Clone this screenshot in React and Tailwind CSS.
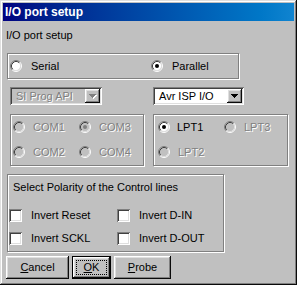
import React from "react";

const sunken =
  "shadow-[inset_1px_1px_#808080,inset_-1px_-1px_#fff,inset_2px_2px_#404040,inset_-2px_-2px_#dfdfdf]";
const raised =
  "shadow-[inset_-1px_-1px_#0a0a0a,inset_1px_1px_#fff,inset_-2px_-2px_#808080,inset_2px_2px_#dfdfdf]";
const etched = "border border-[#808080] shadow-[1px_1px_0_#fff,inset_1px_1px_0_#fff]";
const greyText = "text-[#808080] [text-shadow:1px_1px_0_#fff]";

function Radio({ checked, disabled }) {
  return (
    <svg width="12" height="12" viewBox="0 0 12 12" className="shrink-0">
      <circle cx="6" cy="6" r="4.5" fill={disabled ? "#c0c0c0" : "#fff"} />
      <path d="M2.11 9.89A5.5 5.5 0 0 1 9.89 2.11" fill="none" stroke="#808080" />
      <path d="M9.89 2.11A5.5 5.5 0 0 1 2.11 9.89" fill="none" stroke="#fff" />
      <path d="M2.82 9.18A4.5 4.5 0 0 1 9.18 2.82" fill="none" stroke="#404040" />
      <path d="M9.18 2.82A4.5 4.5 0 0 1 2.82 9.18" fill="none" stroke="#dfdfdf" />
      {checked && <circle cx="6" cy="6" r="2" fill={disabled ? "#808080" : "#000"} />}
    </svg>
  );
}

function RadioItem({ label, checked, disabled, className = "", gap = "ml-[8px]" }) {
  return (
    <div className={`flex h-[12px] items-center ${className}`}>
      <Radio checked={checked} disabled={disabled} />
      <span className={`${gap} leading-[12px] ${disabled ? greyText : ""}`}>{label}</span>
    </div>
  );
}

function Arrow({ disabled }) {
  const d = "M0 0h7v1h-1v1h-1v1h-1v1h-1v-1h-1v-1h-1v-1h-1z";
  return (
    <svg width="8" height="5" viewBox="0 0 8 5">
      {disabled && <path d={d} transform="translate(1 1)" fill="#fff" />}
      <path d={d} fill={disabled ? "#808080" : "#000"} />
    </svg>
  );
}

function Combo({ value, disabled, className }) {
  return (
    <div
      className={`flex h-[18px] items-center p-[2px] ${disabled ? "bg-[#c0c0c0]" : "bg-white"} ${sunken} ${className}`}
    >
      <span className={`flex-1 pl-[4px] leading-[13px] ${disabled ? greyText : ""}`}>{value}</span>
      <div className={`flex h-[14px] w-[15px] items-center justify-center bg-[#c0c0c0] pl-[1px] ${raised}`}>
        <Arrow disabled={disabled} />
      </div>
    </div>
  );
}

function Check({ label, className = "" }) {
  return (
    <div className={`flex h-[13px] items-center ${className}`}>
      <div className={`h-[13px] w-[13px] shrink-0 bg-white ${sunken}`} />
      <span className="ml-[9px] leading-[13px]">{label}</span>
    </div>
  );
}

function Button({ children, className = "", isDefault }) {
  if (isDefault) {
    return (
      <button className={`flex h-[23px] border border-black bg-[#c0c0c0] p-[3px] ${raised} ${className}`}>
        <span className="flex flex-1 items-center justify-center border border-dotted border-black">
          {children}
        </span>
      </button>
    );
  }
  return (
    <button className={`flex h-[23px] items-center justify-center bg-[#c0c0c0] ${raised} ${className}`}>
      {children}
    </button>
  );
}

export default function App() {
  return (
    <div
      className={`flex h-[285px] w-[297px] flex-col bg-[#c0c0c0] p-[3px] font-['Liberation_Sans',Arial,sans-serif] text-[11px] text-black shadow-[inset_-1px_-1px_#0a0a0a,inset_1px_1px_#dfdfdf,inset_-2px_-2px_#808080,inset_2px_2px_#fff]`}
    >
      <div className="flex h-[18px] items-center bg-gradient-to-r from-[#000080] to-[#1084d0] pl-[2px] text-[12px] font-bold text-white">
        I/O port setup
      </div>

      <div className="ml-[3px] mt-[8px] leading-[13px]">I/O port setup</div>

      <div className={`ml-[4px] mt-[11px] flex h-[26px] w-[232px] items-center pl-[2px] ${etched}`}>
        <RadioItem label="Serial" className="w-[141px]" gap="ml-[9px]" />
        <RadioItem label="Parallel" checked gap="ml-[9px]" />
      </div>

      <div className="mt-[8px] flex">
        <Combo value="SI Prog API" disabled className="ml-[7px] w-[92px]" />
        <Combo value="Avr ISP I/O" className="ml-[51px] w-[91px]" />
      </div>

      <div className="mt-[9px] flex">
        <div className={`ml-[7px] flex h-[52px] w-[134px] flex-col gap-[13px] pl-[2px] pt-[6px] ${etched}`}>
          <div className="flex">
            <RadioItem label="COM1" disabled className="w-[66px]" />
            <RadioItem label="COM3" disabled checked />
          </div>
          <div className="flex">
            <RadioItem label="COM2" disabled className="w-[66px]" />
            <RadioItem label="COM4" disabled />
          </div>
        </div>
        <div className={`ml-[9px] flex h-[52px] w-[135px] flex-col gap-[13px] pl-[4px] pt-[6px] ${etched}`}>
          <div className="flex">
            <RadioItem label="LPT1" checked className="w-[66px]" gap="ml-[7px]" />
            <RadioItem label="LPT3" disabled />
          </div>
          <div className="flex">
            <RadioItem label="LPT2" disabled />
          </div>
        </div>
      </div>

      <div className={`ml-[4px] mt-[8px] flex h-[78px] w-[217px] flex-col pt-[6px] ${etched}`}>
        <div className="pl-[5px] leading-[13px]">Select Polarity of the Control lines</div>
        <div className="mt-[15px] flex pl-[1px]">
          <Check label="Invert Reset" className="w-[108px]" />
          <Check label="Invert D-IN" />
        </div>
        <div className="mt-[10px] flex pl-[1px]">
          <Check label="Invert SCKL" className="w-[108px]" />
          <Check label="Invert D-OUT" />
        </div>
      </div>

      <div className="mt-[4px] flex">
        <Button className="ml-[3px] w-[63px]">
          <span>
            <u>C</u>ancel
          </span>
        </Button>
        <Button isDefault className="ml-[3px] w-[39px]">
          <span>
            <u>O</u>K
          </span>
        </Button>
        <Button className="ml-[3px] w-[57px]">
          <span>
            <u>P</u>robe
          </span>
        </Button>
      </div>
    </div>
  );
}
